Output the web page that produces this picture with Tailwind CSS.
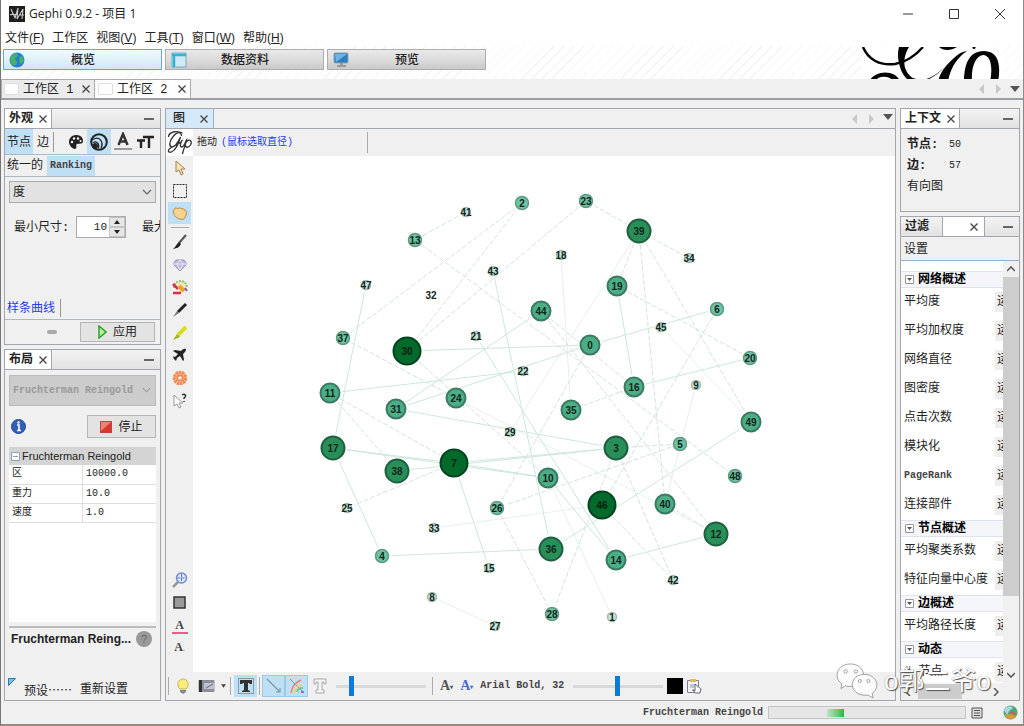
<!DOCTYPE html>
<html lang="zh-CN">
<head>
<meta charset="utf-8">
<title>Gephi 0.9.2 - 项目 1</title>
<script src="https://cdn.jsdelivr.net/npm/@tailwindcss/browser@4"></script>
</head>
<body class="bg-[#f0f0f0] text-[#222]">
<div class="relative flex h-screen min-h-[640px] flex-col overflow-hidden border-r border-b-2 border-l border-r-[#8a8a8a] border-b-[#9b8a7c] border-l-[#777] font-['Liberation_Mono','Noto_Sans_CJK_SC',monospace] text-xs leading-4">

  <!-- Title bar -->
  <header class="flex h-[27px] shrink-0 items-center bg-white pl-2 font-['Open_Sans','Noto_Sans_CJK_SC',sans-serif]">
    <svg class="size-4" viewBox="0 0 16 16"><rect width="16" height="16" fill="#1c1c1c"/><path d="M2 3l4 9 3-10-1 11 6-10-1 10M1 9c3-2 4 1 8-1M11 9h4" fill="none" stroke="#c9c9c9" stroke-width="1.1"/></svg>
    <h1 class="ml-1 flex-1 text-xs">Gephi 0.9.2 - 项目 1</h1>
    <button aria-label="最小化" class="flex w-[46px] justify-center"><svg class="size-3" viewBox="0 0 12 12"><path d="M1 6h10" stroke="#333"/></svg></button>
    <button aria-label="最大化" class="flex w-[46px] justify-center"><svg class="size-3" viewBox="0 0 12 12"><path d="M1.500 1.500h9v9h-9z" fill="none" stroke="#333"/></svg></button>
    <button aria-label="关闭" class="flex w-[46px] justify-center"><svg class="size-3" viewBox="0 0 12 12"><path d="M1 1l10 10M11 1L1 11" stroke="#333"/></svg></button>
  </header>

  <!-- Menu -->
  <nav class="flex h-[19px] shrink-0 items-center gap-2 bg-white pt-[2px] pl-1 font-['Liberation_Sans','Noto_Sans_CJK_SC',sans-serif]">
    <button>文件(<u>F</u>)</button><button>工作区</button><button>视图(<u>V</u>)</button><button>工具(<u>T</u>)</button><button>窗口(<u>W</u>)</button><button>帮助(<u>H</u>)</button>
  </nav>

  <!-- Perspective switcher -->
  <section class="flex h-[33px] shrink-0 items-start gap-[3px] bg-white bg-[repeating-linear-gradient(135deg,#fff_0_6px,#f4f4f4_6px_7px)] pt-[3px] pl-[2px]">
    <button class="flex h-[21px] w-[159px] items-center border border-[#6fa3c8] bg-linear-to-b from-[#f3fafe] to-[#cfe7f5] pt-[2px] pl-[5px] font-medium">
      <svg class="-mt-[2px] size-4" viewBox="0 0 16 16"><circle cx="8" cy="8" r="7.500" fill="#2382c8"/><path d="M2 4c3-4 7-3 7-1s-3 2-3 4 3 2 2 4-2 3-4 2S0 8 2 4zM11 4l3 1 1 4-3 3-2-3z" fill="#49b06c"/></svg>
      <span class="flex-1 pr-5">概览</span></button>
    <button class="flex h-[21px] w-[159px] items-center border border-[#adadad] bg-linear-to-b from-[#e9e9e9] via-[#dcdcdc] to-[#c9c9c9] pt-[2px] pl-[5px] font-medium">
      <svg class="-mt-[2px] size-4" viewBox="0 0 16 16"><path d="M1 1h14v14H1z" fill="#cfeaf2" stroke="#7ab"/><path d="M1 3h14M3 2v13" stroke="#2bb4d8" stroke-width="2.500"/></svg>
      <span class="flex-1 pr-5">数据资料</span></button>
    <button class="flex h-[21px] w-[159px] items-center border border-[#adadad] bg-linear-to-b from-[#e9e9e9] via-[#dcdcdc] to-[#c9c9c9] pt-[2px] pl-[5px] font-medium">
      <svg class="-mt-[2px] size-4" viewBox="0 0 16 16"><rect x="1" y="1" width="14" height="10" rx="1" fill="#2f7cc0" stroke="#8aa"/><path d="M2 2h12L3 10z" fill="#6db4e6"/><path d="M7 11h3v2h3v2H4v-2h3z" fill="#999"/></svg>
      <span class="flex-1 pr-5">预览</span></button>
    <svg class="-mt-[2px] mr-5 ml-auto h-[34px] w-[142px] bg-white" viewBox="860 46 142 34">
      <path d="M862 46c5 12 16 19 32 17 12-2 21-9 28-17" fill="none" stroke="#050505" stroke-width="2.500"/>
      <path d="M898 46h10c-5 8-6 17-3 23 3 7 9 10 14 9l-2 3c-9 1-14-5-17-12-3-8-4-16-2-23z" fill="#050505"/>
      <path d="M912 79c14 2 23-5 32-13 8-8 13-15 22-16l-4 3c-8 7-13 16-15 28h-10c1-6 4-11 8-16-8 8-18 17-33 16z" fill="#050505"/>
      <path d="M868 81c5-12 26-13 31-1l-5 1c-6-7-17-7-21 0zM938 46c4 4 12 4 18 0z" fill="#050505"/>
      <circle cx="973" cy="46.500" r="1.500" fill="#050505"/>
      <path d="M963 81c0-16 4-31 20-31 15 0 17 15 14 31h-8c3-14 1-27-7-27-8 1-12 13-11 27z" fill="#050505"/>
    </svg>
  </section>

  <!-- Workspace tabs -->
  <section class="flex h-[21px] shrink-0 items-stretch border-b-2 border-[#9d9fa6] bg-[#f0f0f0]">
    <div class="flex w-[94px] items-center border border-b-0 border-[#a9abb2] bg-[#ebebeb] pl-[2px]"><span class="h-3 w-[15px] rounded-xs border border-[#ddd] bg-white"></span><button class="ml-1 flex-1 pt-[2px] text-left">工作区 1</button><button aria-label="关闭工作区 1" class="pr-1"><svg class="size-2" viewBox="0 0 8 8"><path d="M.5.500l7 7m0-7l-7 7" stroke="#444" stroke-width="1.300"/></svg></button></div>
    <div class="flex w-[96px] items-center border-t border-r border-[#a9abb2] bg-white pl-[3px]"><span class="h-3 w-[15px] rounded-xs border border-[#ddd] bg-white"></span><button class="ml-1 flex-1 pt-[2px] text-left">工作区 2</button><button aria-label="关闭工作区 2" class="pr-1"><svg class="size-2" viewBox="0 0 8 8"><path d="M.5.500l7 7m0-7l-7 7" stroke="#444" stroke-width="1.300"/></svg></button></div>
    <div class="ml-auto flex items-center"><svg class="h-3 w-12" viewBox="0 0 48 12"><path d="M9 1v10L4 6zM21 1v10l5-5z" fill="#c8c8c8"/><path d="M35 3h10l-5 6z" fill="#555"/></svg></div>
  </section>

  <main class="flex min-h-0 flex-1 gap-1 px-[3px] pt-2">
    <!-- Left column -->
    <div class="flex w-[157px] shrink-0 flex-col gap-1">
      <section class="flex h-[237px] shrink-0 flex-col border border-[#a3a6af]">
        <div class="flex h-5 items-stretch border-b border-[#a3a6af] bg-linear-to-b from-[#f3f3f3] to-[#e2e2e2]"><h2 class="flex items-center gap-[6px] border-r border-[#a3a6af] bg-white px-1 text-xs font-bold">外观<button aria-label="关闭外观"><svg class="size-2" viewBox="0 0 8 8"><path d="M.5.500l7 7m0-7l-7 7" stroke="#444" stroke-width="1.300"/></svg></button></h2><button aria-label="最小化外观" class="mr-[6px] ml-auto flex items-center"><span class="h-[2px] w-[10px] bg-[#666]"></span></button></div>
        <div class="flex h-[26px] items-center border-b border-[#a9b9cb]">
          <button class="h-[25px] bg-[#bfdff5] px-[2px] pt-[2px]">节点</button><button class="h-5 border-r border-[#999] px-1 pt-[2px]">边</button>
          <button aria-label="颜色" class="ml-[11px] flex h-[25px] w-[22px] items-center justify-center"><svg class="size-4" viewBox="0 0 16 16"><path d="M8 1C3 1 1 5 1 8s3 7 6 7c3-1 0-4 2-5 2-1 6 1 6-3S12 1 8 1z" fill="#222"/><circle cx="4" cy="8" r="1.200" fill="#fff"/><circle cx="6" cy="4.500" r="1.200" fill="#fff"/><circle cx="10" cy="4.500" r="1.200" fill="#fff"/><circle cx="12.500" cy="7" r="1" fill="#fff"/></svg></button>
          <button aria-label="大小" class="flex h-[25px] w-[24px] items-center justify-center bg-[#bfdff5]"><svg class="size-[18px]" viewBox="0 0 18 18" fill="none" stroke="#222"><circle cx="9" cy="9" r="7.800" stroke-width="2"/><path d="M3 6.500c6-4 11 2 8 8.500M3 9.500c4-2 7 2 5 6" stroke-width="1.300"/><circle cx="5" cy="13" r="2.500" fill="#222"/></svg></button>
          <button aria-label="标签颜色" class="flex h-[25px] w-[24px] items-center justify-center"><svg class="h-5 w-[18px]" viewBox="0 0 18 20"><path d="M4.500 13L9 2l4.500 11M6 9.500h6" fill="none" stroke="#333" stroke-width="2.500"/><path d="M0 17h18" stroke="#999" stroke-width="2"/></svg></button>
          <button aria-label="标签大小" class="flex h-[25px] w-[22px] items-center justify-center"><svg class="h-4 w-[18px]" viewBox="0 0 18 16"><path d="M0 6.500h8M4 6v8M6 3h11M12 3v11" fill="none" stroke="#222" stroke-width="2.400"/></svg></button>
        </div>
        <div class="flex h-[22px] items-center border-b border-[#a9b9cb]"><button class="px-[2px]">统一的</button><button class="ml-[2px] h-5 bg-[#bfdff5] px-[3px] text-[10px] font-bold text-[#444]">Ranking</button></div>
        <div class="flex flex-1 flex-col px-1 pt-1">
          <div class="relative"><select aria-label="排序属性" class="h-[22px] w-full appearance-none border border-[#aaa] bg-[#e2e2e2] px-[3px] pt-[2px] text-xs"><option>度</option></select><svg class="pointer-events-none absolute top-2 right-1 h-[6px] w-[10px]" viewBox="0 0 10 6"><path d="M1 1l4 4 4-4" fill="none" stroke="#666" stroke-width="1.200"/></svg></div>
          <div class="mt-[13px] -mr-1 flex items-center overflow-hidden whitespace-nowrap"><label for="min" class="w-[67px] shrink-0 pt-[2px] pl-[5px]">最小尺寸:</label>
            <span class="flex h-[22px] w-[50px] shrink-0 border border-[#aaa] bg-white"><input id="min" value="10" class="w-8 min-w-0 pr-[2px] text-right text-[11px]"><span class="flex flex-1 flex-col bg-[#e6e6e6]"><button aria-label="增大" class="flex flex-1 items-center justify-center border border-[#c5c5c5]"><svg class="h-1 w-[6px]" viewBox="0 0 6 4"><path d="M0 4l3-4 3 4z" fill="#222"/></svg></button><button aria-label="减小" class="flex flex-1 items-center justify-center border border-[#c5c5c5]"><svg class="h-1 w-[6px]" viewBox="0 0 6 4"><path d="M0 0l3 4 3-4z" fill="#222"/></svg></button></span></span>
            <span class="ml-auto w-[18px] shrink-0 overflow-hidden pt-[2px]">最大</span></div>
          <a href="#" class="-mx-[2px] mt-auto mb-[2px] h-[18px] self-start border-r border-[#999] pt-[2px] pr-[5px] text-[#1f3cf0]">样条曲线</a>
        </div>
        <div class="flex h-[25px] items-center border-t border-[#a9b9cb]"><span class="ml-[42px] h-1 w-[10px] rounded-xs bg-[#aaa]"></span><button class="mr-[5px] ml-auto flex h-5 w-[75px] items-center justify-center gap-[6px] border border-[#b5b5b5] bg-[#e3e3e3]"><svg class="h-[14px] w-[9px]" viewBox="0 0 9 14"><path d="M1 1l7 6-7 6z" fill="#b6ef9a" stroke="#2da12d" stroke-width="1.500"/></svg><span class="pt-[2px]">应用</span></button></div>
      </section>

      <section class="flex min-h-0 flex-1 flex-col border border-[#a3a6af]">
        <div class="flex h-5 shrink-0 items-stretch border-b border-[#a3a6af] bg-linear-to-b from-[#f3f3f3] to-[#e2e2e2]"><h2 class="flex items-center gap-[6px] border-r border-[#a3a6af] bg-white px-1 text-xs font-bold">布局<button aria-label="关闭布局"><svg class="size-2" viewBox="0 0 8 8"><path d="M.5.500l7 7m0-7l-7 7" stroke="#444" stroke-width="1.300"/></svg></button></h2><button aria-label="最小化布局" class="mr-[6px] ml-auto flex items-center"><span class="h-[2px] w-[10px] bg-[#666]"></span></button></div>
        <div class="flex min-h-0 flex-1 flex-col px-1 pt-[5px]">
          <div class="relative shrink-0"><select disabled aria-label="布局算法" class="h-[31px] w-full appearance-none border border-[#bbb] bg-[#ccc] px-[3px] text-[10px] font-bold text-[#999] opacity-100"><option>Fruchterman Reingold</option></select><svg class="pointer-events-none absolute top-3 right-[5px] h-[6px] w-[9px]" viewBox="0 0 10 6"><path d="M1 1l4 4 4-4" fill="none" stroke="#999" stroke-width="1.200"/></svg></div>
          <div class="flex h-[41px] shrink-0 items-center justify-between pl-[2px]"><svg class="size-[15px]" viewBox="0 0 15 15"><circle cx="7.500" cy="7.500" r="7" fill="#315fb8" stroke="#234a91"/><path d="M6 6h2v5M6 11.500h4" stroke="#fff" stroke-width="1.600" fill="none"/><circle cx="7.500" cy="3.500" r="1.200" fill="#fff"/></svg>
            <button class="flex h-[23px] w-[69px] items-center justify-center gap-[6px] border border-[#b5b5b5] bg-[#e3e3e3]"><svg class="size-3" viewBox="0 0 12 12"><rect x=".5" y=".5" width="11" height="11" fill="#d8382c" stroke="#b44"/><path d="M1 1h10L1 10z" fill="#ee8276"/></svg><span class="pt-[2px]">停止</span></button></div>
          <div class="min-h-0 flex-1 bg-white">
            <table class="w-full table-fixed border-collapse text-left text-[10px]">
              <thead><tr class="h-[18px] bg-[#d4d4d4]"><th colspan="2" class="font-['Liberation_Sans',sans-serif] text-[11px] font-normal whitespace-nowrap"><span class="flex items-center gap-[2px] pl-[2px]"><svg class="size-[9px]" viewBox="0 0 9 9"><path d="M.5.500h8v8h-8zM2 4.500h5" fill="#fff" stroke="#8aa0b8"/></svg>Fruchterman Reingold</span></th></tr></thead>
              <tbody>
                <tr class="h-[19px] border-b border-[#ddd]"><td class="border-r border-[#ddd] pl-[3px]">区</td><td class="pl-[3px]">10000.0</td></tr>
                <tr class="h-[19px] border-b border-[#ddd]"><td class="border-r border-[#ddd] pl-[3px]">重力</td><td class="pl-[3px]">10.0</td></tr>
                <tr class="h-[19px] border-b border-[#ddd]"><td class="border-r border-[#ddd] pl-[3px]">速度</td><td class="pl-[3px]">1.0</td></tr>
              </tbody>
            </table>
          </div>
          <div class="mt-1 flex h-6 shrink-0 items-center justify-between border-t-2 border-[#bbb] pr-1 pl-[2px]"><b class="font-['Liberation_Sans',sans-serif] text-xs whitespace-nowrap">Fruchterman Reing...</b><button aria-label="帮助" class="flex size-4 items-center justify-center rounded-full bg-[#999] font-['Liberation_Sans',sans-serif] text-[11px] text-[#666]">?</button></div>
          <div class="flex h-[50px] shrink-0 items-end pb-[2px]"><svg class="mb-3 -ml-[1px] size-2" viewBox="0 0 8 8"><path d="M.5.500h7l-7 7z" fill="#7dbde6" stroke="#2a78b0"/></svg><button class="ml-2 font-['Noto_Sans_CJK_SC',sans-serif]">预设……</button><button class="ml-2">重新设置</button></div>
        </div>
      </section>
    </div>

    <!-- Graph window -->
    <section class="flex min-w-0 flex-1 flex-col border border-[#a3a6af]">
      <div class="flex h-5 shrink-0 items-stretch border-b border-[#a3a6af] bg-[#f0f0f0]"><h2 class="flex w-12 items-center justify-between border-r border-[#8fb4d0] bg-[#d5e9f8] px-[5px] text-xs font-medium"><span class="pl-[2px]">图</span><button aria-label="关闭图"><svg class="size-2" viewBox="0 0 8 8"><path d="M.5.500l7 7m0-7l-7 7" stroke="#444" stroke-width="1.300"/></svg></button></h2><svg class="my-auto ml-auto h-3 w-12" viewBox="0 0 48 12"><path d="M10 1v10L5 6zM22 1v10l5-5z" fill="#c8c8c8"/><path d="M36 1h10l-5 6z" fill="#555"/></svg></div>
      <div class="flex h-[27px] shrink-0 items-center">
        <svg class="h-[27px] w-[27px] bg-white" viewBox="0 0 26 27" fill="none" stroke="#333"><path d="M15 7c0-5-5-4-8 0-4 5-5 10-2 11 4 1 8-8 9-10-2 6-4 13-9 15-4 1-4-2-1-4 4-3 9-3 12-8M2 8C2 3 10 1 16 4M16 11c-2 2-3 7-1 7 3 0 4-6 5-7-1 5-3 9-4 14M20 13c3-4 6-1 4 3-2 3-5 3-5 0" stroke-width="1.300"/></svg>
        <p class="ml-1 flex h-[21px] w-[171px] items-center gap-1 border-r border-[#aaa] text-[10px]"><span>拖动</span><span class="text-[#1f3cf0]">(鼠标选取直径)</span></p>
      </div>
      <div class="flex min-h-0 flex-1">
        <div class="flex w-[27px] shrink-0 flex-col items-center pb-[16px]">
          <button aria-label="直接选择" class="flex h-[23px] w-6 items-center justify-center"><svg class="size-4" viewBox="0 0 16 16"><path d="M4 1v11l3-2 2 5 2-1-2-5h4z" fill="#f7e2b5" stroke="#a58350"/></svg></button>
          <button aria-label="矩形选择" class="flex h-[23px] w-6 items-center justify-center"><svg class="size-4" viewBox="0 0 16 16"><path d="M1.500 1.500h13v13h-13z" fill="none" stroke="#222" stroke-dasharray="2 1"/></svg></button>
          <button aria-label="拖动" class="flex h-[22px] w-[23px] items-center justify-center bg-[#bfdff5]"><svg class="size-4" viewBox="0 0 16 16"><path d="M2 5c1-3 3-2 4-1 1-2 3-1 3 0 2-1 3 0 3 1 3 0 3 3 2 5-1 4-3 5-6 4S2 11 2 9L1 7z" fill="#f7d391" stroke="#b98a40"/></svg></button>
          <hr class="my-[3px] w-[18px] border-[#aaa]">
          <button aria-label="画笔" class="flex h-[22px] w-6 items-center justify-center"><svg class="size-4" viewBox="0 0 16 16"><path d="M14 1L7 9" stroke="#555" stroke-width="2"/><path d="M7 8l2 2c-2 4-4 4-8 5 3-2 3-5 6-7z" fill="#222"/></svg></button>
          <button aria-label="大小调整" class="flex h-[23px] w-6 items-center justify-center"><svg class="size-4" viewBox="0 0 16 16"><path d="M4 3h8l3 4-7 7-7-7z" fill="#b9b7dc" stroke="#9998b8"/><path d="M1 7h14M5 7l3 6 3-6-3-4z" fill="none" stroke="#e8e8f8"/></svg></button>
          <button aria-label="涂色" class="flex h-[22px] w-6 items-center justify-center"><svg class="size-4" viewBox="0 0 16 16"><path d="M4 4l8-2 3 8-7 4z" fill="#f5e4c0"/><path d="M2 9c0-9 12-9 13-1" fill="none" stroke="#8ac46b" stroke-width="2" stroke-dasharray="2 1"/><path d="M1 5l5 5M1 14h8" stroke="#dd2d4c" stroke-width="2.500"/><path d="M7 7l5 5" stroke="#e9a421" stroke-width="4"/><path d="M13 9l2 3" stroke="#7557b4" stroke-width="2"/></svg></button>
          <button aria-label="铅笔" class="flex h-[23px] w-6 items-center justify-center"><svg class="size-4" viewBox="0 0 16 16"><path d="M14 2L6 10" stroke="#222" stroke-width="3"/><path d="M5 9l2 2-6 4z" fill="#777"/></svg></button>
          <button aria-label="荧光笔" class="flex h-[23px] w-6 items-center justify-center"><svg class="size-4" viewBox="0 0 16 16"><path d="M14 2L6 10" stroke="#d8dc24" stroke-width="4"/><path d="M5 9l3 3-7 3z" fill="#a6b020"/></svg></button>
          <button aria-label="最短路径" class="flex h-[22px] w-6 items-center justify-center"><svg class="size-4" viewBox="0 0 16 16"><path d="M14 2c-2-1-4 1-5 2L3 3 1 4l5 3-3 3-2-1 1 3 2 2 1-3 3-2 3 5 1-1-1-6c2-2 3-3 3-5z" fill="#222"/></svg></button>
          <button aria-label="热图" class="flex h-[23px] w-6 items-center justify-center"><svg class="size-4" viewBox="0 0 16 16" fill="none" stroke="#f58a50"><circle cx="8" cy="8" r="5.500" stroke-width="3.500" stroke-dasharray="2.500 .5"/><circle cx="8" cy="8" r="2.800" stroke-width="2"/></svg></button>
          <button aria-label="编辑节点" class="flex h-[23px] w-6 items-center justify-center"><svg class="size-4" viewBox="0 0 16 16"><path d="M2 2v11l3-2 2 4 2-1-2-4h4z" fill="#fff" stroke="#999"/><path d="M10 2c3-2 5 1 2 3v1M12 8v1" fill="none" stroke="#333" stroke-width="1.500"/></svg></button>
          <button aria-label="居中图形" class="mt-auto flex h-[23px] w-6 items-center justify-center"><svg class="size-4" viewBox="0 0 16 16" fill="none"><path d="M6 10l-5 5" stroke="#999" stroke-width="2.500"/><circle cx="9.500" cy="6" r="5" fill="#e1e9ff" stroke="#718bd3" stroke-width="1.500"/><path d="M9.500 2v8M5.500 6h8" stroke="#5972c3" stroke-dasharray="3 1"/></svg></button>
          <button aria-label="重置颜色" class="flex h-[23px] w-6 items-center justify-center"><svg class="size-[13px]" viewBox="0 0 13 13"><path d="M1 1h11v11H1z" fill="#999" stroke="#333" stroke-width="1.500"/></svg></button>
          <button aria-label="重置标签颜色" class="mt-1 h-[16px] w-4 border-b-2 border-[#f05a8c] font-['Liberation_Serif',serif] text-xs leading-3 font-bold text-[#444]">A</button>
          <button aria-label="重置标签可见" class="mt-1 h-[18px] w-4 font-['Liberation_Serif',serif] text-xs font-bold text-[#444]">A<span class="text-[8px] text-[#999]">.</span></button>
        </div>
        <svg id="graph" class="min-h-0 min-w-0 flex-1 bg-white font-['Liberation_Sans',sans-serif]" viewBox="194 156 702 516" role="img" aria-label="网络图"></svg>
      </div>
      <div class="flex h-7 shrink-0 items-center pl-[2px] whitespace-nowrap">
        <span class="h-[18px] w-px bg-[#aaa]"></span>
        <button aria-label="背景" class="ml-[7px]"><svg class="h-4 w-[14px]" viewBox="0 0 14 16"><path d="M4 11C0 7 2 1 7 1s7 6 3 10z" fill="#f8ec7d" stroke="#c6b354"/><path d="M4 12h6v2l-3 2-3-2z" fill="#888"/></svg></button>
        <button aria-label="截图" class="ml-2"><svg class="h-[14px] w-[17px]" viewBox="0 0 17 14"><rect x=".5" y="1" width="16" height="12" rx="1" fill="#8e8e98"/><path d="M1 1h3v12H1z" fill="#333"/><path d="M6 4h10v6H6z" fill="#bfc2d0"/><path d="M8 9l7-4" stroke="#666"/></svg></button>
        <svg class="ml-[6px] h-1 w-[5px]" viewBox="0 0 6 4"><path d="M0 0h6L3 4z" fill="#444"/></svg>
        <span class="ml-1 h-[18px] w-px bg-[#aaa]"></span>
        <button aria-label="显示节点标签" class="ml-[3px] flex h-[22px] w-[23px] items-center justify-center bg-[#bfdff5]"><svg class="size-4" viewBox="0 0 16 16"><path d="M.5.500h15v15H.5z" fill="none" stroke="#555" stroke-dasharray="1 1"/><path d="M2 2h12v4h-2L11 5H10v7l2 1v1H4v-1l2-1V5H5L4 6H2z" fill="#333"/></svg></button>
        <span class="mx-[2px] h-[18px] w-px bg-[#aaa]"></span>
        <button aria-label="显示边" class="flex h-[22px] w-[23px] items-center justify-center border border-[#9cc8e6] bg-[#bfdff5]"><svg class="size-4" viewBox="0 0 16 16"><path d="M1 1l12 12M14 10v4h-4" fill="none" stroke="#7598b0" stroke-width="1.200"/></svg></button>
        <button aria-label="边使用节点颜色" class="flex h-[22px] w-[23px] items-center justify-center border border-[#9cc8e6] bg-[#bfdff5]"><svg class="size-4" viewBox="0 0 16 16" fill="none"><path d="M1 1l13 13" stroke="#7598b0"/><path d="M2 15C3 8 6 5 12 2" stroke="#ee7e76" stroke-width="1.500"/><path d="M5 15c1-5 3-7 8-8" stroke="#f1cf61" stroke-width="1.500"/><path d="M8 14c1-3 2-4 6-4" stroke="#70c797" stroke-width="2"/><path d="M12 14h3" stroke="#9a6bcf" stroke-width="2"/></svg></button>
        <button aria-label="显示边标签" class="ml-1"><svg class="size-4" viewBox="0 0 16 16"><path d="M2 1h12v5h-2V4h-2v8h2v3H4v-3h2V4H4v2H2z" fill="#f3f3f3" stroke="#aaa"/></svg></button>
        <input type="range" aria-label="边粗细" min="0" max="100" value="15" class="ml-2 h-5 w-[90px] appearance-none bg-[linear-gradient(#d9d9d9,#d9d9d9)] bg-[length:100%_3px] bg-center bg-no-repeat [&::-webkit-slider-thumb]:h-5 [&::-webkit-slider-thumb]:w-[5px] [&::-webkit-slider-thumb]:appearance-none [&::-webkit-slider-thumb]:bg-[#0b7bd8]">
        <span class="ml-[6px] h-[18px] w-px bg-[#aaa]"></span>
        <button aria-label="字号模式" class="ml-[7px] font-['Liberation_Serif',serif] text-sm font-bold text-[#555]">A<span class="align-middle text-[6px]">▾</span></button>
        <button aria-label="标签颜色模式" class="ml-[7px] font-['Liberation_Serif',serif] text-sm font-bold text-[#4c6dcc]">A<span class="align-middle text-[6px]">▾</span></button>
        <button class="ml-[7px] text-[10px] font-bold text-[#444]">Arial Bold, 32</button>
        <input type="range" aria-label="标签大小" min="0" max="100" value="49" class="ml-[9px] h-5 w-[90px] appearance-none bg-[linear-gradient(#d9d9d9,#d9d9d9)] bg-[length:100%_3px] bg-center bg-no-repeat [&::-webkit-slider-thumb]:h-5 [&::-webkit-slider-thumb]:w-[5px] [&::-webkit-slider-thumb]:appearance-none [&::-webkit-slider-thumb]:bg-[#0b7bd8]">
        <button aria-label="默认标签颜色" class="ml-1 size-4 bg-black"></button>
        <button aria-label="属性" class="ml-[3px]"><svg class="size-4" viewBox="0 0 16 16"><path d="M1.500 2.500h11v12h-11z" fill="#f4f4f8" stroke="#879"/><path d="M4 1h6v3H4z" fill="#dbbd55"/><path d="M4 7h6M4 9h4M6 12h3" stroke="#89a"/><path d="M9 6l6 5-1 4H9l-2-3 2 1z" fill="#fff" stroke="#667"/></svg></button>
      </div>
    </section>

    <!-- Right column -->
    <div class="flex w-[120px] shrink-0 flex-col gap-1">
      <section class="h-[104px] shrink-0 border border-[#a3a6af]">
        <div class="flex h-5 items-stretch border-b border-[#a3a6af] bg-linear-to-b from-[#f3f3f3] to-[#e2e2e2]"><h2 class="flex items-center gap-[6px] border-r border-[#a3a6af] bg-white px-1 text-xs font-bold">上下文<button aria-label="关闭上下文"><svg class="size-2" viewBox="0 0 8 8"><path d="M.5.500l7 7m0-7l-7 7" stroke="#444" stroke-width="1.300"/></svg></button></h2><button aria-label="最小化上下文" class="mr-[6px] ml-auto flex items-center"><span class="h-[2px] w-[10px] bg-[#666]"></span></button></div>
        <dl class="grid grid-cols-[42px_1fr] gap-y-[5px] pt-2 pl-[6px]"><dt class="font-bold">节点:</dt><dd class="text-[10px]">50</dd><dt class="font-bold">边:</dt><dd class="text-[10px]">57</dd><dt class="whitespace-nowrap">有向图</dt></dl>
      </section>
      <section class="flex min-h-0 flex-1 flex-col border border-[#a3a6af]">
        <div class="flex h-5 shrink-0 items-stretch border-b border-[#a3a6af] bg-linear-to-b from-[#f3f3f3] to-[#e2e2e2]"><button class="w-[42px] border-r border-[#a3a6af] pl-1 text-left text-xs font-bold">过滤</button><div class="flex w-[42px] items-center justify-end border-r border-[#a3a6af] bg-white pr-[6px]"><button aria-label="关闭过滤"><svg class="size-2" viewBox="0 0 8 8"><path d="M.5.500l7 7m0-7l-7 7" stroke="#444" stroke-width="1.300"/></svg></button></div><button aria-label="最小化过滤" class="mr-[6px] ml-auto flex items-center"><span class="h-[2px] w-[10px] bg-[#666]"></span></button></div>
        <div class="flex h-6 shrink-0 items-center border-b border-[#8fb4d8] pt-[2px] pl-[3px]">设置</div>
        <div class="flex min-h-0 flex-1">
          <div class="flex min-w-0 flex-1 flex-col">
            <div id="stats" class="min-h-0 flex-1 overflow-hidden bg-white pt-[10px]"></div>
            <div class="flex h-[17px] shrink-0 items-center justify-between px-1"><svg class="h-2 w-[6px]" viewBox="0 0 6 8"><path d="M5 0L1 4l4 4" fill="none" stroke="#555" stroke-width="1.500"/></svg><span class="mr-auto ml-[7px] h-[15px] w-11 bg-[#cdcdcd]"></span><svg class="h-2 w-[6px]" viewBox="0 0 6 8"><path d="M1 0l4 4-4 4" fill="none" stroke="#555" stroke-width="1.500"/></svg></div>
          </div>
          <div class="flex w-[16px] flex-col items-center"><svg class="my-[5px] h-[6px] w-2 shrink-0" viewBox="0 0 8 6"><path d="M0 5l4-4 4 4" fill="none" stroke="#555" stroke-width="1.500"/></svg><span class="h-[319px] w-full bg-[#cdcdcd]"></span><svg class="mt-auto mb-[22px] h-[6px] w-2 shrink-0" viewBox="0 0 8 6"><path d="M0 1l4 4 4-4" fill="none" stroke="#555" stroke-width="1.500"/></svg></div>
        </div>
      </section>
    </div>
  </main>

  <!-- Status bar -->
  <footer class="flex h-[23px] shrink-0 items-center justify-end pr-[5px]">
    <span class="mr-[5px] text-[10px] font-bold text-[#444]">Fruchterman Reingold</span>
    <span role="progressbar" aria-label="Fruchterman Reingold" class="flex h-[13px] w-[198px] items-center border border-[#c4c4c4] bg-[#e6e6e6] pl-[58px]"><span class="h-2 w-[17px] bg-linear-to-r from-[#b8e6c2] to-[#16b83d]"></span></span>
    <button aria-label="取消" class="ml-[5px]"><svg class="size-3" viewBox="0 0 12 12"><path d="M1 1h10v10H1zM3 3.500h6M3 6h6M3 8.500h6" fill="#ddd" stroke="#555"/></svg></button>
    <svg class="ml-5 size-[15px]" viewBox="0 0 15 15"><circle cx="7.500" cy="7.500" r="7" fill="#4ba77b"/><path d="M1 5c3-5 8-4 9-2L6 6 4 10z" fill="#a9d7e8"/><path d="M2 10c3-2 4 0 6-1l5 2c-2 4-8 5-11-1z" fill="#d79a40"/><path d="M7 7h5v4z" fill="#dd5a33"/></svg>
  </footer>

  <!-- Watermark lies over the window's lower right corner -->
  <div class="pointer-events-none absolute right-8 bottom-[25px] flex items-center gap-[6px] font-['Liberation_Sans','Noto_Sans_CJK_SC',sans-serif] text-[26px] leading-8 whitespace-nowrap text-white [text-shadow:1px_1px_1px_#555,0_0_1px_#777]">
    <svg class="h-9 w-[42px]" viewBox="0 0 44 38" fill="#fcfcfc" stroke="#888" stroke-width=".8"><path d="M15 1C7 1 1 6 1 13c0 4 2 7 5 9l-1 5 5-3c3 1 6 1 9 0 8-1 11-6 10-12C28 5 22 1 15 1z"/><circle cx="10" cy="9" r="1.800"/><circle cx="21" cy="9" r="1.800"/><path d="M30 12c-8 0-13 5-13 11s6 11 13 11h4l5 3-1-5c3-2 5-5 5-9 0-6-6-11-13-11z"/><circle cx="25" cy="19" r="1.600"/><circle cx="34" cy="19" r="1.600"/></svg>
    <span>o郭二爷o</span>
  </div>
</div>

<script>
const nodes = {
  41:[467,212,5],2:[523,203,7],23:[587,201,7],39:[640,231,12],13:[416,240,7],18:[562,255,5],34:[690,258,5],43:[494,271,5],47:[367,285,5],32:[432,295,0],
  19:[618,286,10],44:[542,311,10],6:[718,309,7],45:[662,327,5],37:[344,338,7],21:[477,336,5],30:[408,351,14],0:[591,345,10],20:[751,358,7],22:[524,371,5],
  9:[697,385,5],16:[635,387,10],11:[331,393,10],24:[457,398,10],31:[397,409,10],35:[572,410,10],49:[752,422,10],29:[511,432,5],3:[617,448,12],5:[681,444,7],
  17:[334,448,12],7:[455,463,14],38:[398,471,12],10:[549,478,10],48:[736,476,7],26:[498,508,7],25:[348,508,5],46:[603,505,14],40:[666,504,10],33:[435,528,5],
  12:[717,534,12],4:[383,556,7],36:[552,549,12],14:[617,560,10],15:[490,568,5],42:[674,580,5],8:[433,597,5],28:[553,614,7],1:[613,617,5],27:[496,626,5]
};
const solid = '30-0 11-22 31-0 31-44 43-36 21-14 47-17 17-4 17-10 17-7 38-3 31-3 7-15 7-10 19-16 0-6 16-20 4-36 14-12 49-36 7-3 10-14';
const faint = '18-35 9-40 33-46 45-49 39-29 1-10 24-12 8-27';
const dashed = '13-41 37-2 30-2 30-23 23-39 39-34 39-19 39-40 39-49 19-20 44-16 13-48 37-24 30-10 11-38 11-7 7-25 6-46 0-26 5-26 5-3 35-16 3-42 40-12 3-28 26-28 46-42 44-12';
const palette = {0:['none','none'],5:['#c5e5d8','#a3b8af'],7:['#6dc3a3','#5f9a84'],10:['#4bae86','#3b7a62'],12:['#298f58','#1f6040'],14:['#046a2b','#044420']};
const edge = (list, color, dash) => list.split(' ').map(p => {
  const [a, b] = p.split('-').map(k => nodes[k]);
  const d = Math.hypot(b[0]-a[0], b[1]-a[1]), ux = (b[0]-a[0])/d, uy = (b[1]-a[1])/d;
  return `<line x1="${a[0]+ux*(a[2]+2)}" y1="${a[1]+uy*(a[2]+2)}" x2="${b[0]-ux*(b[2]+2)}" y2="${b[1]-uy*(b[2]+2)}" stroke="${color}" ${dash ? 'stroke-dasharray="5 2"' : ''}/>`;
}).join('');
document.getElementById('graph').innerHTML = edge(faint, '#e6f1ec', false) + edge(solid, '#cde7dd', false) + edge(dashed, '#d3e4dc', true) +
  Object.entries(nodes).map(([n, [x, y, r]]) => `<circle cx="${x}" cy="${y}" r="${r ? r - 0.5 : 0}" fill="${palette[r][0]}" stroke="${palette[r][1]}" stroke-width="${r > 9 ? 2 : 1.5}"/><text x="${x}" y="${y + 3.5}" text-anchor="middle" font-size="10" font-weight="700" fill="${r > 13 ? '#03200f' : '#12261c'}">${n}</text>`).join('');

const stats = [
  ['网络概述', ['平均度','平均加权度','网络直径','图密度','点击次数','模块化','PageRank','连接部件']],
  ['节点概述', ['平均聚类系数','特征向量中心度']],
  ['边概述', ['平均路径长度']],
  ['动态', ['# 节点']]
];
document.getElementById('stats').innerHTML = stats.map(([title, items]) =>
  `<h3 class="flex h-[17px] items-center gap-1 border-y border-[#dfe3ef] bg-[#f5f6fa] pl-1 font-bold text-black"><svg class="size-[9px]" viewBox="0 0 9 9"><path d="M.5.5h8v8h-8z" fill="#fff" stroke="#999"/><path d="M2 3h5L4.500 6z" fill="#555"/></svg>${title}</h3>` +
  items.map(t => `<div class="flex h-[29px] items-center justify-between pb-[2px] pl-[3px] whitespace-nowrap"><span class="${t === 'PageRank' ? 'text-[10px] font-bold text-[#444]' : 'text-xs'}">${t}</span><button aria-label="运行${t}" class="h-5 w-2 shrink-0 overflow-hidden bg-[#eee] pl-[2px] text-left">运行</button></div>`).join('')).join('');
</script>
</body>
</html>
